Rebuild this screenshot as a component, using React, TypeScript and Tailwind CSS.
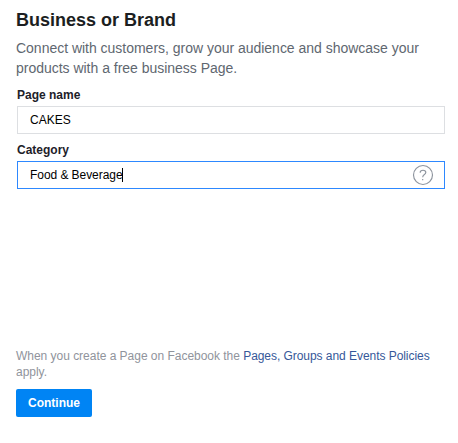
export default function App() {
  return (
    <main className="h-[443px] w-[458px] overflow-hidden bg-white pl-4 pt-2 font-['Liberation_Sans',Arial,sans-serif] text-[12px] text-[#1d2129]">
      <h1 className="h-[30px] text-[18px] font-bold leading-[24px] text-[#1c1e21]">Business or Brand</h1>
      <p className="h-[47px] whitespace-nowrap text-[14px] leading-[20px] tracking-[-0.017px] text-[#606770]">
        Connect with customers, grow your audience and showcase your
        <br />
        products with a free business Page.
      </p>
      <label className="ml-px block h-[21px] font-bold leading-[20px]">Page name</label>
      <div className="ml-px flex h-7 w-[428px] items-center border border-[#dddfe2] px-3 text-black">CAKES</div>
      <label className="ml-px mt-[6px] block h-[21px] font-bold leading-[20px]">Category</label>
      <div className="ml-px flex h-7 w-[428px] items-center border border-[#2d88ff] pl-3 pr-[10px] text-black">
        <span className="tracking-[-0.06px]">Food &amp; Beverage</span>
        <span className="-ml-px h-[14px] w-px bg-black" />
        <svg className="ml-auto" width="22" height="22" viewBox="0 0 22 22" fill="none" stroke="#8d949e" strokeWidth="1.15">
          <circle cx="11" cy="11" r="9.5" />
          <path d="M8.2 8.8V8.5C8.2 5.5 13.8 5.5 13.8 8.5C13.8 10.6 10.7 10.5 10.7 13.2M10.7 14.9v1.4" />
        </svg>
      </div>
      <p className="mt-[159px] h-[41px] whitespace-nowrap leading-4 tracking-[-0.025px] text-[#90949c]">
        When you create a Page on Facebook the <a className="tracking-[-0.05px] text-[#365899]">Pages, Groups and Events Policies</a>
        <br />
        apply.
      </p>
      <button className="h-7 w-[76px] rounded-[2px] bg-[#0084f4] font-bold text-white">Continue</button>
    </main>
  );
}
